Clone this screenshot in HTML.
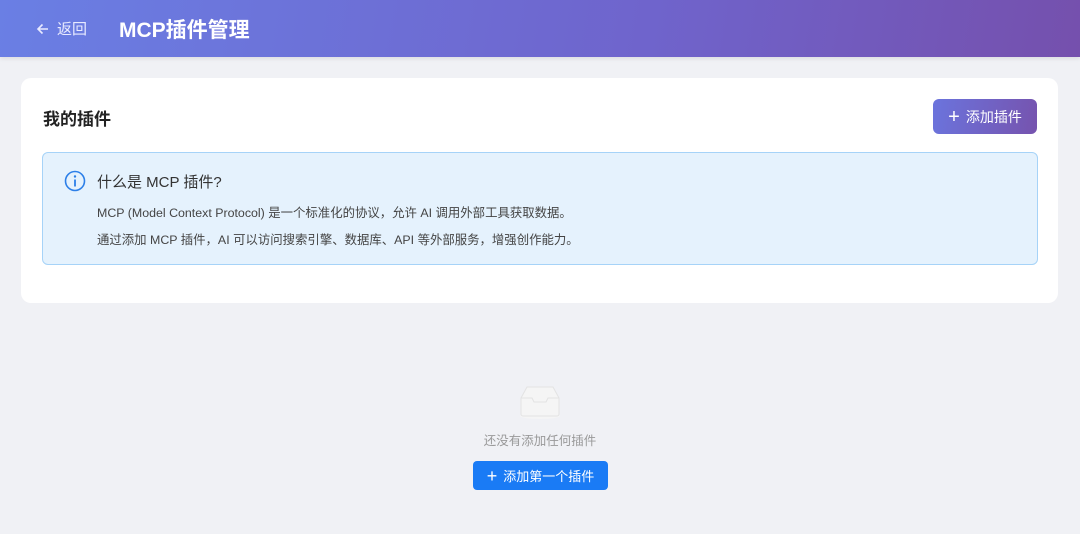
<!DOCTYPE html>
<html><head><meta charset="utf-8"><style>
*{margin:0;padding:0;box-sizing:border-box}
body{width:1080px;height:534px;background:#f0f1f5;font-family:"Liberation Sans","Noto Sans CJK SC",sans-serif;position:relative;overflow:hidden}
.hdr{position:absolute;left:0;top:0;width:1080px;height:57px;background:linear-gradient(100deg,#6a7fe4 0%,#6f64cc 60%,#7550ad 100%);box-shadow:0 2px 4px rgba(0,0,0,.08)}
.back{position:absolute;left:35px;top:18px;color:#e8eaff;font-size:15px;display:flex;align-items:center;gap:6px}
.title{position:absolute;left:119px;top:14px;color:#fff;font-size:21px;font-weight:bold}
.card{position:absolute;left:21px;top:78px;width:1037px;height:225px;background:#fff;border-radius:10px}
.h2{position:absolute;left:22px;top:27px;font-size:17px;font-weight:bold;color:#222}
.btn{position:absolute;left:912px;top:21px;width:104px;height:35px;border-radius:6px;background:linear-gradient(100deg,#6b74dd,#7653ae);color:#fff;font-size:14px;display:flex;align-items:center;justify-content:center;gap:6px}
.info{position:absolute;left:21px;top:74px;width:996px;height:113px;background:#e5f2fd;border:1px solid #a6d3f8;border-radius:6px}
.it{position:absolute;left:54px;top:18px;font-size:15px;color:#333}
.p{position:absolute;left:54px;font-size:12.4px;color:#444}
.empty{position:absolute;left:0;width:1080px;text-align:center}
.b2{position:absolute;left:473px;top:461px;width:135px;height:29px;background:#1a7bf5;border-radius:4px;color:#fff;font-size:13px;display:flex;align-items:center;justify-content:center;gap:6px}
</style></head><body>
<div class="hdr">
<div class="back"><svg width="16" height="16" viewBox="0 0 16 16"><path d="M13 8H3M7.5 3.5L3 8l4.5 4.5" stroke="#e8eaff" stroke-width="1.6" fill="none"/></svg>返回</div>
<div class="title">MCP插件管理</div>
</div>
<div class="card">
<div class="h2">我的插件</div>
<div class="btn"><span style="font-size:20px;font-weight:300;line-height:1">+</span>添加插件</div>
<div class="info">
<svg style="position:absolute;left:21px;top:17px" width="22" height="22" viewBox="0 0 22 22"><circle cx="11" cy="11" r="9.5" stroke="#2c7fe8" stroke-width="1.6" fill="none"/><circle cx="11" cy="6.5" r="1.2" fill="#2c7fe8"/><path d="M11 9.5v7" stroke="#2c7fe8" stroke-width="1.8"/></svg>
<div class="it">什么是 MCP 插件?</div>
<div class="p" style="top:50px">MCP (Model Context Protocol) 是一个标准化的协议，允许 AI 调用外部工具获取数据。</div>
<div class="p" style="top:77px">通过添加 MCP 插件，AI 可以访问搜索引擎、数据库、API 等外部服务，增强创作能力。</div>
</div>
</div>
<svg style="position:absolute;left:518px;top:384px" width="44" height="36" viewBox="0 0 44 36"><ellipse cx="22" cy="32" rx="20" ry="3" fill="#f5f5f5"/><path d="M3 14L9 3h26l6 11v16a2 2 0 0 1-2 2H5a2 2 0 0 1-2-2z" fill="#f5f5f5" stroke="#e3e3e3"/><path d="M3 14h11l2 4h12l2-4h11" fill="none" stroke="#e3e3e3"/></svg>
<div class="empty" style="top:430px;font-size:12.5px;color:#999">还没有添加任何插件</div>
<div class="b2"><span style="font-size:18px;font-weight:300;line-height:1">+</span>添加第一个插件</div>
</body></html>
